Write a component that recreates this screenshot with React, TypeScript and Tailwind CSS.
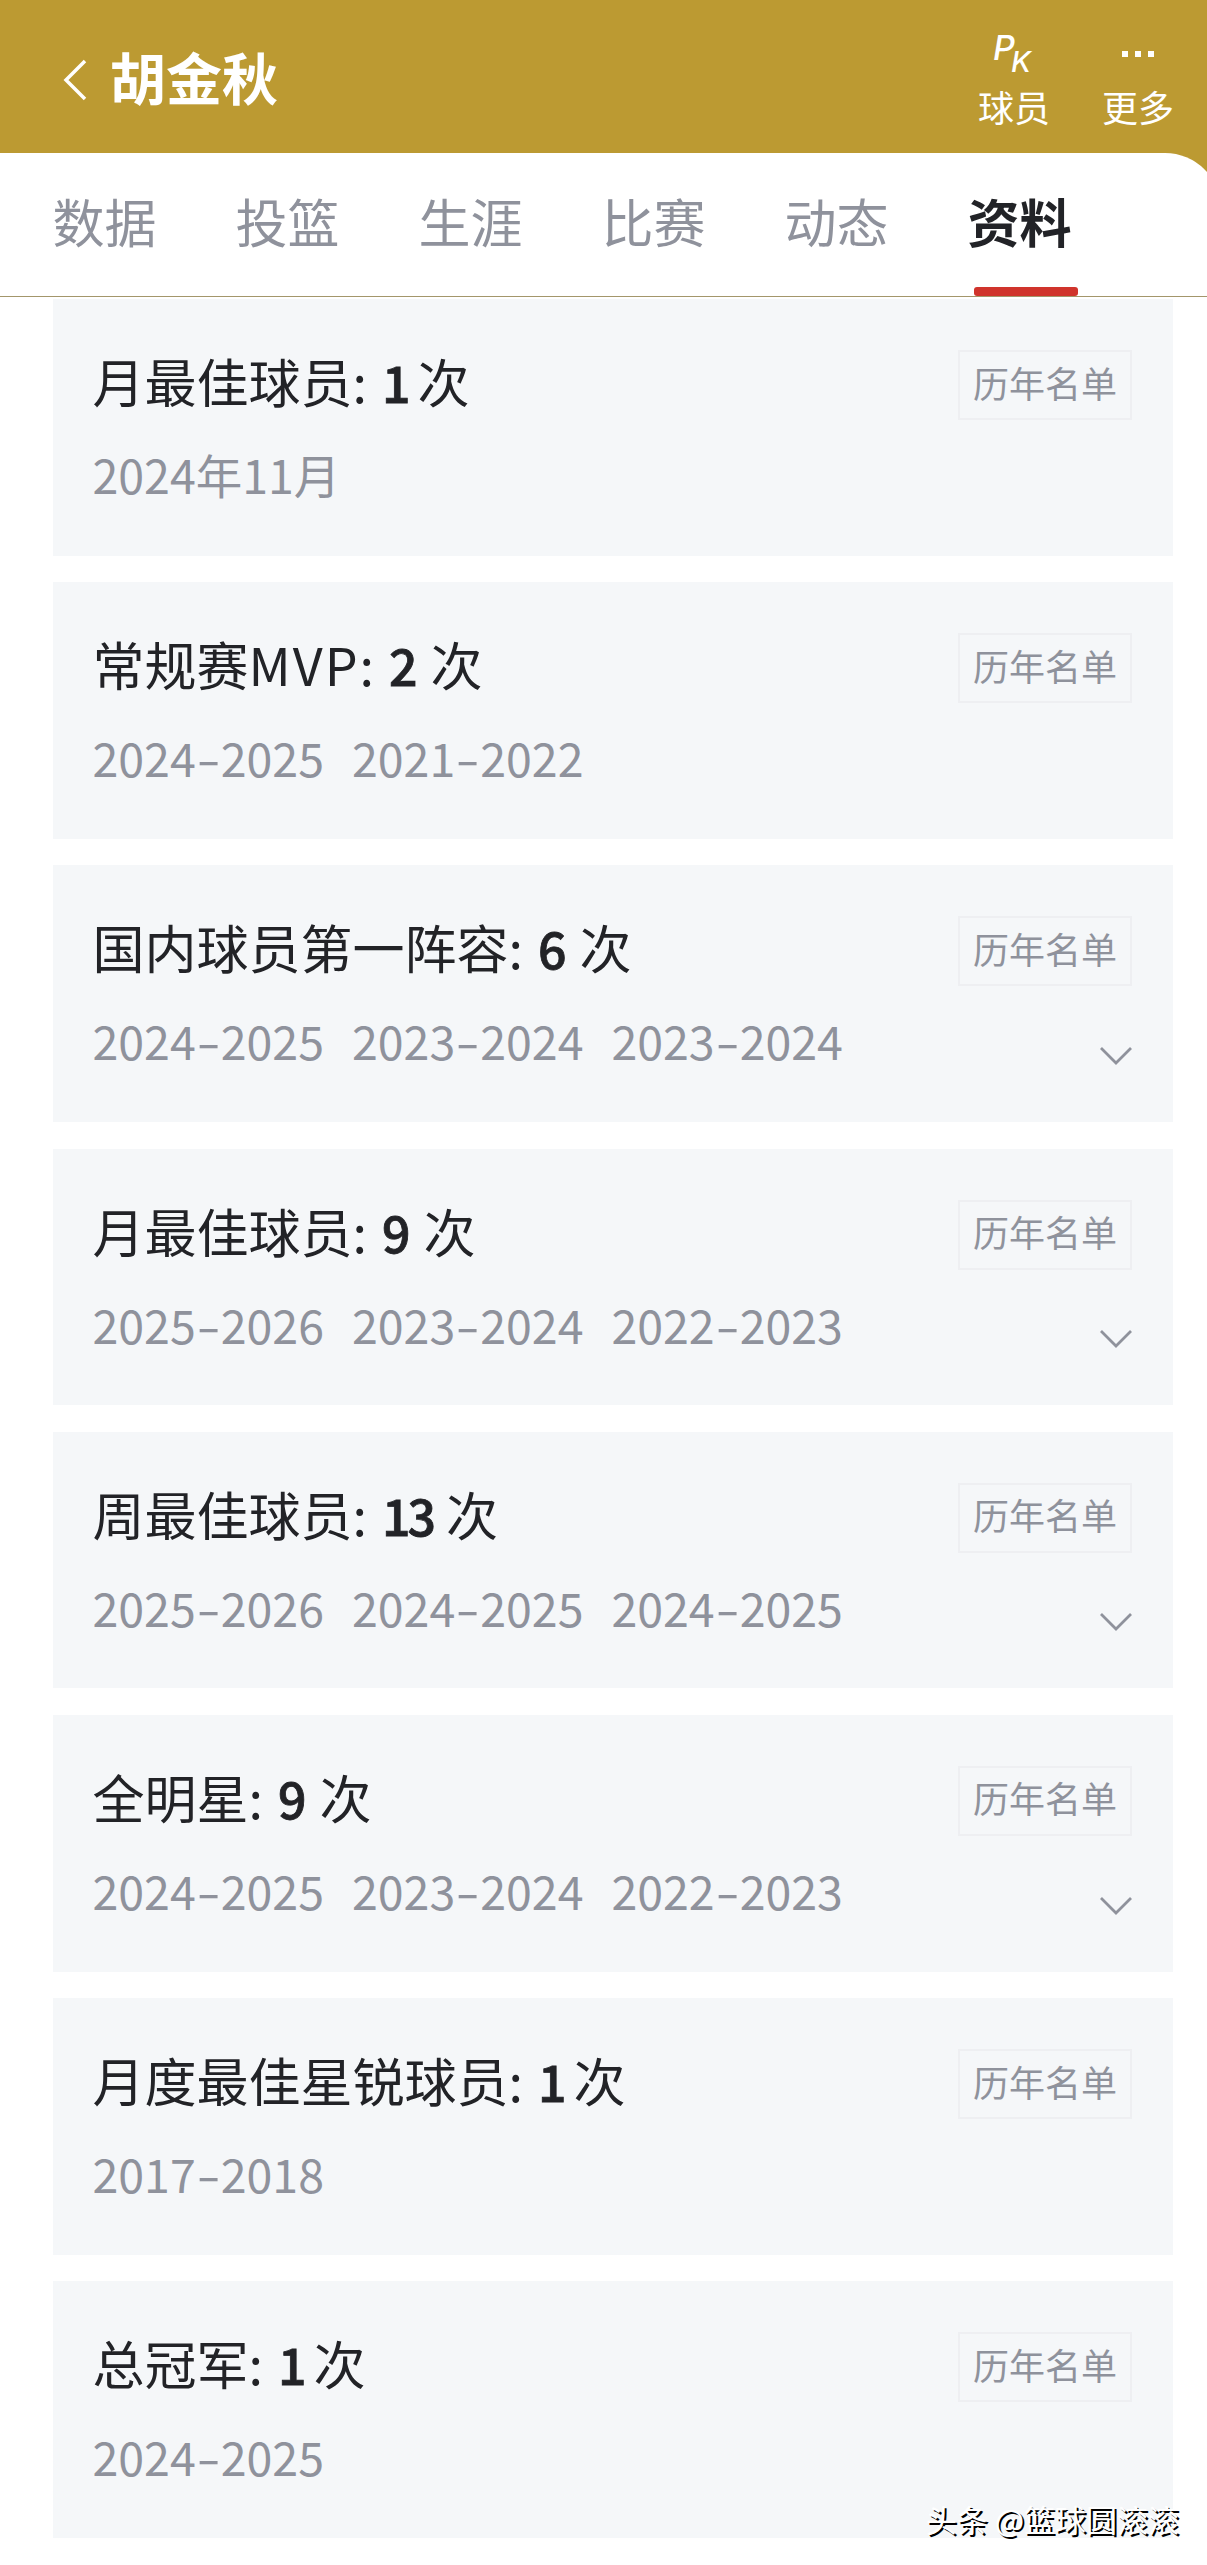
import { Fragment } from 'react';
import clsx from 'clsx';

// ==========================================
// DATA
// ==========================================

interface Honor {
  name: string;
  suffix?: string;
  count: string;
  seasons: string[];
  expandable?: boolean;
}

const TABS = ['数据', '投篮', '生涯', '比赛', '动态', '资料'];

const HONORS: Honor[] = [
  { name: '月最佳球员', count: '1', seasons: ['2024年11月'] },
  { name: '常规赛', suffix: 'MVP', count: '2', seasons: ['2024-2025', '2021-2022'] },
  {
    name: '国内球员第一阵容',
    count: '6',
    seasons: ['2024-2025', '2023-2024', '2023-2024'],
    expandable: true,
  },
  {
    name: '月最佳球员',
    count: '9',
    seasons: ['2025-2026', '2023-2024', '2022-2023'],
    expandable: true,
  },
  {
    name: '周最佳球员',
    count: '13',
    seasons: ['2025-2026', '2024-2025', '2024-2025'],
    expandable: true,
  },
  {
    name: '全明星',
    count: '9',
    seasons: ['2024-2025', '2023-2024', '2022-2023'],
    expandable: true,
  },
  { name: '月度最佳星锐球员', count: '1', seasons: ['2017-2018'] },
  { name: '总冠军', count: '1', seasons: ['2024-2025'] },
];

// ==========================================
// HEADER
// ==========================================

function Header() {
  return (
    <header className="flex h-[153px] items-start justify-between pl-[62px] pr-[33px] text-white">
      <div className="flex items-start pt-[36px]">
        <svg className="mt-[23px] h-[42px] w-[26px]" viewBox="0 0 26 42" fill="none" stroke="currentColor" strokeWidth={3.5}>
          <path d="M23 2L4 21l19 19" />
        </svg>
        <h1 className="ml-[22px] text-[56px] leading-[80px] font-bold">胡金秋</h1>
      </div>

      <div className="flex gap-[52px] pt-[30px] text-[36px] leading-[52px]">
        <button className="flex flex-col items-center">
          <span className="-ml-[4px] flex h-[50px] font-['Inter',sans-serif] font-medium italic">
            <span className="text-[34px] leading-[36px]">P</span>
            <span className="-ml-[4px] pt-[14px] text-[29px] leading-[36px]">K</span>
          </span>
          <span>球员</span>
        </button>
        <button className="flex flex-col items-center">
          <span className="flex h-[50px] gap-[7px] pt-[21px]">
            <i className="size-[6px] bg-white" />
            <i className="size-[6px] bg-white" />
            <i className="size-[6px] bg-white" />
          </span>
          <span>更多</span>
        </button>
      </div>
    </header>
  );
}

// ==========================================
// TABS
// ==========================================

function TabBar({ active }: { active: string }) {
  return (
    <nav className="-mr-[14px] flex h-[144px] gap-[79px] rounded-tr-[56px] bg-white pl-[52.5px] shadow-[inset_0_-1px_0_#a3966b]">
      {TABS.map((tab) => (
        <button
          key={tab}
          className={clsx(
            'relative h-[143px] w-[104px] pb-[8px] text-[52px] whitespace-nowrap',
            tab === active ? 'font-bold text-[#222327]' : 'text-[#8f929c]'
          )}
        >
          {tab}
          {tab === active && (
            <span className="absolute bottom-0 left-[6.5px] h-[9px] w-[104px] rounded-[3px] bg-[#d0342c]" />
          )}
        </button>
      ))}
    </nav>
  );
}

// ==========================================
// HONOR CARD
// ==========================================

function Season({ value }: { value: string }) {
  return (
    <span>
      {value.split('-').map((part, i) => (
        <Fragment key={i}>
          {i > 0 && <span className="inline-block w-[25px] scale-x-150 text-center">-</span>}
          {part}
        </Fragment>
      ))}
    </span>
  );
}

function HonorCard({ name, suffix, count, seasons, expandable }: Honor) {
  return (
    <section className="relative h-[256.7px] bg-[#f5f7f9] pt-[46px] pr-[41px] pl-[39.5px]">
      <div className="flex items-start justify-between">
        <h2 className="flex text-[52px] leading-[72px] text-[#222327]">
          {name}
          {suffix && <span className="tracking-[2px]">{suffix}</span>}:
          <b
            className={clsx(
              'mr-[13px] ml-[15px] text-[50px] font-medium [-webkit-text-stroke:0.8px_#222327]',
              count === '1' && 'tracking-[-6px]',
              count.length > 1 && 'tracking-[-3px]'
            )}
          >
            {count}
          </b>
          次
        </h2>
        <button className="mt-[5px] h-[70px] w-[174px] border-2 border-[#eeeff2] pb-[6px] text-[36px] leading-[59px] whitespace-nowrap text-[#8f929c]">
          历年名单
        </button>
      </div>

      <p className="mt-[20px] flex gap-[28px] text-[46.5px] leading-[68px] text-[#8f929c]">
        {seasons.map((season, i) => (
          <Season key={i} value={season} />
        ))}
      </p>

      {expandable && (
        <svg
          className="absolute right-[41px] bottom-[56px] h-[20px] w-[32px]"
          viewBox="0 0 32 20"
          fill="none"
          stroke="#8f929c"
          strokeWidth={2.8}
        >
          <path d="M1 2l15 15L31 2" />
        </svg>
      )}
    </section>
  );
}

export default function App() {
  return (
    <div className="relative h-[2565px] w-[1207px] overflow-hidden bg-[#bc9a32] font-['Noto_Sans_CJK_SC',sans-serif]">
      <Header />
      <TabBar active="资料" />
      <main className="flex h-[2268px] flex-col gap-[26.5px] bg-white pt-[2px] pr-[34px] pl-[53px]">
        {HONORS.map((honor, i) => (
          <HonorCard key={i} {...honor} />
        ))}
      </main>

      {/* Watermark */}
      <div className="absolute right-[28px] bottom-[24px] text-[31px] leading-[44px] whitespace-nowrap text-white [text-shadow:2px_2px_0_#000]">
        头条 @篮球圆滚滚
      </div>
    </div>
  );
}
